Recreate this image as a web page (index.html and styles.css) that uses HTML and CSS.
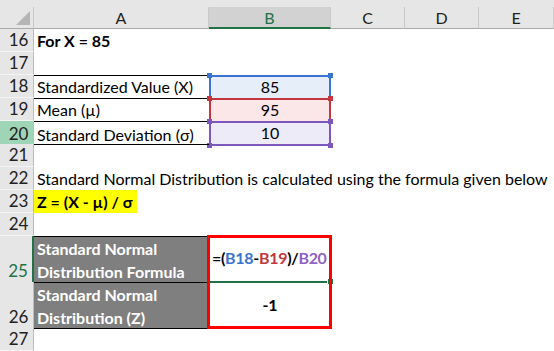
FILE: index.html
```html
<!DOCTYPE html>
<html>
<head>
<meta charset="utf-8">
<link rel="stylesheet" href="styles.css">
</head>
<body>
<div class="sheet">
  <div class="row top-strip"><div class="strip"></div></div>
  <div class="row hdr">
    <div class="corner"><span class="tri"></span></div>
    <div class="ch">A</div>
    <div class="ch sel">B</div>
    <div class="ch">C</div>
    <div class="ch">D</div>
    <div class="ch">E</div>
  </div>

  <div class="row">
    <div class="rh">16</div>
    <div class="c bold">For X = 85</div>
    <div class="c"></div><div class="c"></div><div class="c"></div><div class="c"></div>
  </div>
  <div class="row">
    <div class="rh">17</div>
    <div class="c"></div><div class="c"></div><div class="c"></div><div class="c"></div><div class="c"></div>
  </div>
  <div class="row">
    <div class="rh">18</div>
    <div class="c lined">Standardized Value (X)</div>
    <div class="c ref ref-blue">85<span class="sq tl"></span><span class="sq tr"></span></div>
    <div class="c"></div><div class="c"></div><div class="c"></div>
  </div>
  <div class="row">
    <div class="rh">19</div>
    <div class="c lined">Mean (µ)</div>
    <div class="c ref ref-red">95<span class="sq tl"></span><span class="sq tr"></span></div>
    <div class="c"></div><div class="c"></div><div class="c"></div>
  </div>
  <div class="row">
    <div class="rh rh-green">20</div>
    <div class="c lined">Standard Deviation (σ)</div>
    <div class="c ref ref-purple last">10<span class="sq tl"></span><span class="sq tr"></span><span class="sq bl"></span><span class="sq br"></span></div>
    <div class="c"></div><div class="c"></div><div class="c"></div>
  </div>
  <div class="row">
    <div class="rh">21</div>
    <div class="c lined"></div>
    <div class="c"></div><div class="c"></div><div class="c"></div><div class="c"></div>
  </div>
  <div class="row">
    <div class="rh">22</div>
    <div class="c overflow">Standard Normal Distribution is calculated using the formula given below</div>
    <div class="c"></div><div class="c"></div><div class="c"></div><div class="c"></div>
  </div>
  <div class="row">
    <div class="rh">23</div>
    <div class="c"><span class="hl">Z = (X - µ) / σ</span></div>
    <div class="c"></div><div class="c"></div><div class="c"></div><div class="c"></div>
  </div>
  <div class="row">
    <div class="rh">24</div>
    <div class="c"></div><div class="c"></div><div class="c"></div><div class="c"></div><div class="c"></div>
  </div>
  <div class="row tall">
    <div class="rh rh-active">25</div>
    <div class="c dark">Standard Normal<br>Distribution Formula</div>
    <div class="c active"><span class="formula">=(<span class="k-blue">B18</span>-<span class="k-red">B19</span>)/<span class="k-purple">B20</span></span><span class="caret"></span><span class="handle"></span></div>
    <div class="c"></div><div class="c"></div><div class="c"></div>
  </div>
  <div class="row tall">
    <div class="rh">26</div>
    <div class="c dark">Standard Normal<br>Distribution (Z)</div>
    <div class="c result">-1</div>
    <div class="c"></div><div class="c"></div><div class="c"></div>
  </div>
  <div class="row">
    <div class="rh">27</div>
    <div class="c lined"></div>
    <div class="c"></div><div class="c"></div><div class="c"></div><div class="c"></div>
  </div>

  <div class="redbox"></div>
</div>
</body>
</html>
```

FILE: styles.css
```css
html, body {
  margin: 0;
  padding: 0;
  background: #ffffff;
}

.sheet {
  position: relative;
  width: 554px;
  height: 351px;
  overflow: hidden;
  font-family: "Lato", "Open Sans", sans-serif;
  font-size: 16px;
  color: #000;
}

.row {
  display: grid;
  grid-template-columns: 34px 175px 122px 74px 74px 75px;
  height: 23px;
}

.row.tall {
  height: 46px;
}

.top-strip {
  display: block;
  height: 7px;
  background: #e6e6e6;
}

.row.hdr {
  height: 22px;
  background: #e6e6e6;
}

.corner {
  position: relative;
  border-right: 1px solid #c9c9c9;
  border-bottom: 1px solid #a9a9a9;
}

.tri {
  position: absolute;
  right: 3px;
  bottom: 3px;
  width: 0;
  height: 0;
  border-left: 14px solid transparent;
  border-bottom: 14px solid #b5b5b5;
}

.ch {
  display: flex;
  align-items: center;
  justify-content: center;
  color: #222;
  border-right: 1px solid #c9c9c9;
  border-bottom: 1px solid #a9a9a9;
  font-size: 16px;
}

.ch.sel {
  background: #d2d2d2;
  color: #217346;
  border-bottom: 2px solid #217346;
}

.rh {
  display: flex;
  align-items: flex-end;
  justify-content: center;
  padding-left: 4px;
  padding-bottom: 1px;
  background: #e6e6e6;
  border-right: 1px solid #bdbdbd;
  border-bottom: 1px solid #f4f4f4;
  color: #222;
  font-size: 17px;
  box-sizing: border-box;
}

.rh-green {
  background: #9fd5b7;
}

.rh-active {
  color: #217346;
  border-right: 2px solid #217346;
}

.c {
  position: relative;
  display: flex;
  align-items: flex-end;
  padding: 0 3px 2px;
  box-sizing: border-box;
  white-space: nowrap;
  min-width: 0;
}

.bold {
  font-weight: bold;
}

.lined {
  border-top: 1px solid #000;
}

.overflow {
  overflow: visible;
}

.hl {
  display: inline-flex;
  align-items: flex-end;
  height: 23px;
  margin: 0 0 -2px -3px;
  padding: 0 4px 2px 3px;
  background: #ffff00;
  font-weight: bold;
  box-sizing: border-box;
}

.ref {
  justify-content: center;
  border-top: 2px solid;
  border-left: 2px solid;
  border-right: 2px solid;
}

.ref-blue {
  background: #e6eef9;
  border-color: #3a73d0;
  color: #000;
}

.ref-blue .sq { background: #3a73d0; }

.ref-red {
  background: #fbe7e7;
  border-color: #c3363d;
}

.ref-red .sq { background: #c3363d; }

.ref-purple {
  background: #eeebf8;
  border-color: #7e57bd;
}

.ref-purple.last {
  border-bottom: 2px solid #7e57bd;
}

.ref-purple .sq { background: #7e57bd; }

.sq {
  position: absolute;
  width: 5px;
  height: 5px;
}

.sq.tl { left: -4px; top: -4px; }
.sq.tr { right: -4px; top: -4px; }
.sq.bl { left: -4px; bottom: -4px; }
.sq.br { right: -4px; bottom: -4px; }

.dark {
  flex-direction: column;
  align-items: flex-start;
  justify-content: center;
  background: #7f7f7f;
  color: #fff;
  font-weight: bold;
  line-height: 23px;
  border-top: 1px solid #000;
  border-right: 1px solid #000;
  padding-top: 0;
  padding-bottom: 0;
}

.active {
  align-items: center;
  padding-left: 3px;
  padding-bottom: 2px;
  border-bottom: 2px solid #217346;
  font-weight: bold;
}

.formula {
  letter-spacing: -0.3px;
}

.k-blue { color: #3a73d0; }
.k-red { color: #c3363d; }
.k-purple { color: #8e62c6; }

.caret {
  display: inline-block;
  width: 1px;
  height: 19px;
  margin-left: 2px;
  background: #000;
}

.handle {
  position: absolute;
  right: -3px;
  bottom: -4px;
  width: 5px;
  height: 5px;
  background: #217346;
  border: 1px solid #fff;
}

.result {
  justify-content: center;
  align-items: center;
  font-weight: bold;
}

.redbox {
  position: absolute;
  left: 207px;
  top: 235px;
  width: 125px;
  height: 94px;
  box-sizing: border-box;
  border: 3px solid #ff0000;
  pointer-events: none;
}
```
